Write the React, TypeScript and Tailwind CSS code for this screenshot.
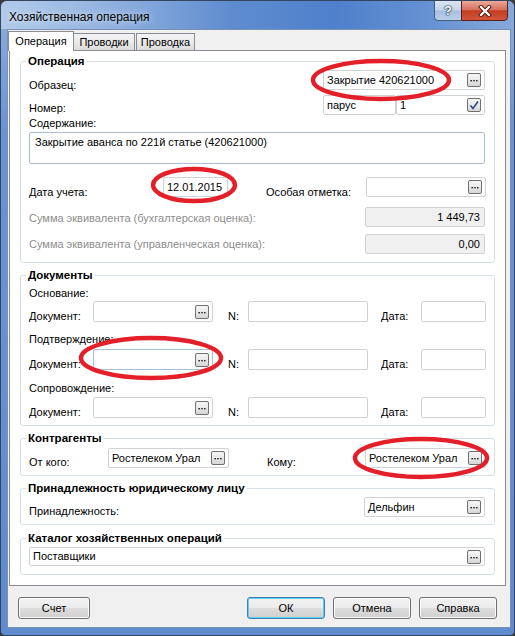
import clsx from "clsx";
import type { ReactNode } from "react";

function Dots() {
  return (
    <svg width="12" height="12" viewBox="0 0 12 12">
      <rect x="2.5" y="6" width="1.4" height="1.4" fill="#111" />
      <rect x="5.3" y="6" width="1.4" height="1.4" fill="#111" />
      <rect x="8.1" y="6" width="1.4" height="1.4" fill="#111" />
    </svg>
  );
}

function Check() {
  return (
    <svg width="12" height="12" viewBox="0 0 12 12">
      <path d="M2.5 6.5 L5 9.5 L10 2.5" fill="none" stroke="#2a4a80" strokeWidth="1.6" />
    </svg>
  );
}

function SmallBtn({ kind }: { kind: "dots" | "check" }) {
  return (
    <div className="flex h-[14px] w-[14px] shrink-0 items-center justify-center rounded-[2px] border border-[#707070] bg-[linear-gradient(180deg,#f6f6f6_0%,#e8e8e8_50%,#d6d6d6_100%)]">
      {kind === "dots" ? <Dots /> : <Check />}
    </div>
  );
}

type FieldProps = {
  className: string;
  value?: string;
  btn?: "dots" | "check";
  disabled?: boolean;
  right?: boolean;
  blue?: boolean;
};

function Field({ className, value, btn, disabled, right, blue }: FieldProps) {
  return (
    <div
      className={clsx(
        "flex shrink-0 items-center rounded-[2px] border pl-[3px] pr-[3px]",
        blue ? "border-[#a9bfd8]" : "border-[#cfd2d6]",
        disabled ? "bg-[#f0f0f0]" : "bg-white",
        className
      )}
    >
      <span className={clsx("flex-1 whitespace-nowrap", right && "pr-[1px] text-right")}>{value}</span>
      {btn && <SmallBtn kind={btn} />}
    </div>
  );
}

function Group({ title, className, children }: { title: string; className: string; children: ReactNode }) {
  return (
    <div className={clsx("relative rounded-[3px] border border-[#d5dfe5]", className)}>
      <div className="absolute -top-[8px] left-[5px] bg-white px-[2px] text-[11.5px] font-bold leading-[14px]">
        {title}
      </div>
      <div className="ml-[8px] mr-[9px]">{children}</div>
    </div>
  );
}

function Btn({ children, className, primary }: { children: ReactNode; className: string; primary?: boolean }) {
  return (
    <div
      className={clsx(
        "flex h-[22px] items-center justify-center rounded-[3px] border bg-[linear-gradient(180deg,#f2f2f2_0%,#ebebeb_48%,#dddddd_52%,#cfcfcf_100%)]",
        primary
          ? "border-[#3c7fb1] shadow-[inset_0_0_0_1px_#5fd0f5]"
          : "border-[#707070] shadow-[inset_0_0_0_1px_#fbfbfb]",
        className
      )}
    >
      {children}
    </div>
  );
}

function DocRow({ blue }: { blue?: boolean }) {
  return (
    <div className="flex h-[21px]">
      <span className="mt-[9px] w-[64px] shrink-0">Документ:</span>
      <Field className="h-[21px] w-[120px]" btn="dots" blue={blue} />
      <span className="ml-[15px] mt-[9px] w-[20px] shrink-0">N:</span>
      <Field className="h-[21px] w-[120px]" />
      <span className="ml-[13px] mt-[9px] w-[40px] shrink-0">Дата:</span>
      <Field className="h-[21px] w-[65px]" />
    </div>
  );
}

export default function App() {
  return (
    <div className="relative h-[636px] w-[515px] bg-[#3a3a3a] font-['Liberation_Sans',Arial,sans-serif] text-[11px] leading-[13px] text-black">
      <div className="flex h-full w-full flex-col overflow-hidden rounded-t-[7px] rounded-b-[5px] border border-[#34465f] bg-[linear-gradient(180deg,#8fb0de_0%,#6a94d4_20%,#5f8bcf_100%)]">
        {/* title bar */}
        <div className="flex h-[28px] shrink-0 bg-[linear-gradient(90deg,#b2cbe9_0%,#93b3e0_20%,#5f8ccf_45%,#4f80cb_65%,#6893d4_85%,#86a9dc_100%)]">
          <div className="flex-1 pl-[8px] pt-[9px] text-[12px] leading-[14px] [text-shadow:0_0_6px_rgba(255,255,255,0.9)]">
            Хозяйственная операция
          </div>
          <div className="-mt-px mr-[6px] flex h-[21px]">
            <div className="flex w-[28px] items-center justify-center rounded-bl-[4px] border border-[#4a5b78] bg-[linear-gradient(180deg,#dbe6f3_0%,#c3d5ec_48%,#a6bfe0_52%,#b9cfea_100%)] text-[13px] font-bold text-white [text-shadow:0_0_1px_#1d2b40,0_0_1px_#1d2b40,0_0_2px_#1d2b40]">
              ?
            </div>
            <div className="-ml-px flex w-[47px] items-center justify-center rounded-br-[4px] border border-[#5a1e16] bg-[linear-gradient(180deg,#e9a99b_0%,#d8715b_45%,#c33c22_52%,#d0563c_100%)]">
              <svg width="14" height="12" viewBox="0 0 14 12">
                <path d="M3 2 L11 10 M11 2 L3 10" stroke="#4a1a12" strokeWidth="4" strokeLinecap="square" />
                <path d="M3 2 L11 10 M11 2 L3 10" stroke="#fff" strokeWidth="2.2" strokeLinecap="square" />
              </svg>
            </div>
          </div>
        </div>

        {/* client */}
        <div className="mb-[7px] ml-[6px] mr-[3px] flex flex-1 flex-col border border-[#7890b4] bg-[#f0f0f0]">
          {/* tabs */}
          <div className="flex h-[20px] items-end">
            <div className="relative z-10 -mb-px flex h-[20px] w-[66px] items-center justify-center border border-b-0 border-[#898c95] bg-white">
              Операция
            </div>
            <div className="flex h-[17px] w-[61px] items-center justify-center border border-b-0 border-l-0 border-[#898c95] bg-[linear-gradient(180deg,#f3f3f3_0%,#ebebeb_50%,#dcdcdc_100%)]">
              Проводки
            </div>
            <div className="ml-px flex h-[17px] w-[59px] items-center justify-center border border-b-0 border-[#898c95] bg-[linear-gradient(180deg,#f3f3f3_0%,#ebebeb_50%,#dcdcdc_100%)]">
              Проводка
            </div>
          </div>

          {/* panel */}
          <div className="ml-px w-[497px] border border-[#898c95] bg-white px-[10px] py-[10px]">
            <Group title="Операция" className="h-[202px]">
              <div className="mt-[8px] flex h-[20px]">
                <span className="mt-[9px] flex-1">Образец:</span>
                <Field className="h-[20px] w-[162px]" value="Закрытие 420621000" btn="dots" />
              </div>
              <div className="mt-[5px] flex h-[20px]">
                <span className="mt-[7px] flex-1">Номер:</span>
                <Field className="h-[20px] w-[73px]" value="парус" />
                <Field className="h-[20px] w-[89px]" value="1" btn="check" />
              </div>
              <div className="mt-[2px] h-[13px]">Содержание:</div>
              <div className="mt-[2px] h-[32px] rounded-[2px] border border-[#a9bfd8] bg-white pl-[5px] pt-[3px]">
                Закрытие аванса по 221й статье (420621000)
              </div>
              <div className="mt-[13px] flex h-[20px]">
                <span className="mt-[9px] w-[134px] shrink-0">Дата учета:</span>
                <Field className="h-[20px] w-[65px]" value="12.01.2015" />
                <span className="ml-[38px] mt-[9px] w-[100px] shrink-0">Особая отметка:</span>
                <Field className="h-[20px] w-[120px]" btn="dots" />
              </div>
              <div className="mt-[10px] flex h-[20px]">
                <span className="mt-[5px] flex-1 text-[#8d8d8d]">Сумма эквивалента (бухгалтерская оценка):</span>
                <Field className="h-[20px] w-[120px]" value="1 449,73" disabled right />
              </div>
              <div className="mt-[7px] flex h-[20px]">
                <span className="mt-[4px] flex-1 text-[#8d8d8d]">Сумма эквивалента (управленческая оценка):</span>
                <Field className="h-[20px] w-[120px]" value="0,00" disabled right />
              </div>
            </Group>

            <Group title="Документы" className="mt-[12px] h-[151px]">
              <div className="mt-[11px] h-[13px]">Основание:</div>
              <div className="mt-[1px]">
                <DocRow />
              </div>
              <div className="mt-[11px] h-[13px]">Подтверждение:</div>
              <div className="mt-[3px]">
                <DocRow blue />
              </div>
              <div className="mt-[12px] h-[13px]">Сопровождение:</div>
              <div className="mt-[2px]">
                <DocRow />
              </div>
            </Group>

            <Group title="Контрагенты" className="mt-[12px] h-[38px]">
              <div className="mt-[9px] flex h-[20px]">
                <span className="mt-[8px] w-[79px] shrink-0">От кого:</span>
                <Field className="h-[20px] w-[121px]" value="Ростелеком Урал" btn="dots" />
                <span className="ml-[38px] mt-[8px] w-[98px] shrink-0">Кому:</span>
                <Field className="h-[20px] w-[121px]" value="Ростелеком Урал" btn="dots" />
              </div>
            </Group>

            <Group title="Принадлежность юридическому лицу" className="mt-[12px] h-[37px]">
              <div className="mt-[8px] flex h-[20px]">
                <span className="mt-[8px] flex-1">Принадлежность:</span>
                <Field className="h-[20px] w-[121px]" value="Дельфин" btn="dots" />
              </div>
            </Group>

            <Group title="Каталог хозяйственных операций" className="mt-[13px] h-[37px]">
              <div className="mt-[8px]">
                <Field className="h-[19px] w-full" value="Поставщики" btn="dots" />
              </div>
            </Group>
          </div>

          {/* buttons */}
          <div className="mt-[11px] flex">
            <Btn className="ml-[10px] w-[72px]">Счет</Btn>
            <Btn className="ml-[157px] w-[78px]" primary>
              ОК
            </Btn>
            <Btn className="ml-[8px] w-[78px]">Отмена</Btn>
            <Btn className="ml-[8px] w-[78px]">Справка</Btn>
          </div>
        </div>
      </div>

      {/* red annotation marks */}
      <svg className="pointer-events-none absolute inset-0" width="515" height="636" viewBox="0 0 515 636">
        <g fill="none" stroke="#e3202a" strokeWidth="4.5">
          <ellipse cx="381" cy="80" rx="68" ry="19" />
          <ellipse cx="194" cy="185" rx="41" ry="16" />
          <ellipse cx="151" cy="358" rx="70" ry="20" />
          <ellipse cx="421" cy="458" rx="66" ry="19" />
        </g>
      </svg>
    </div>
  );
}
